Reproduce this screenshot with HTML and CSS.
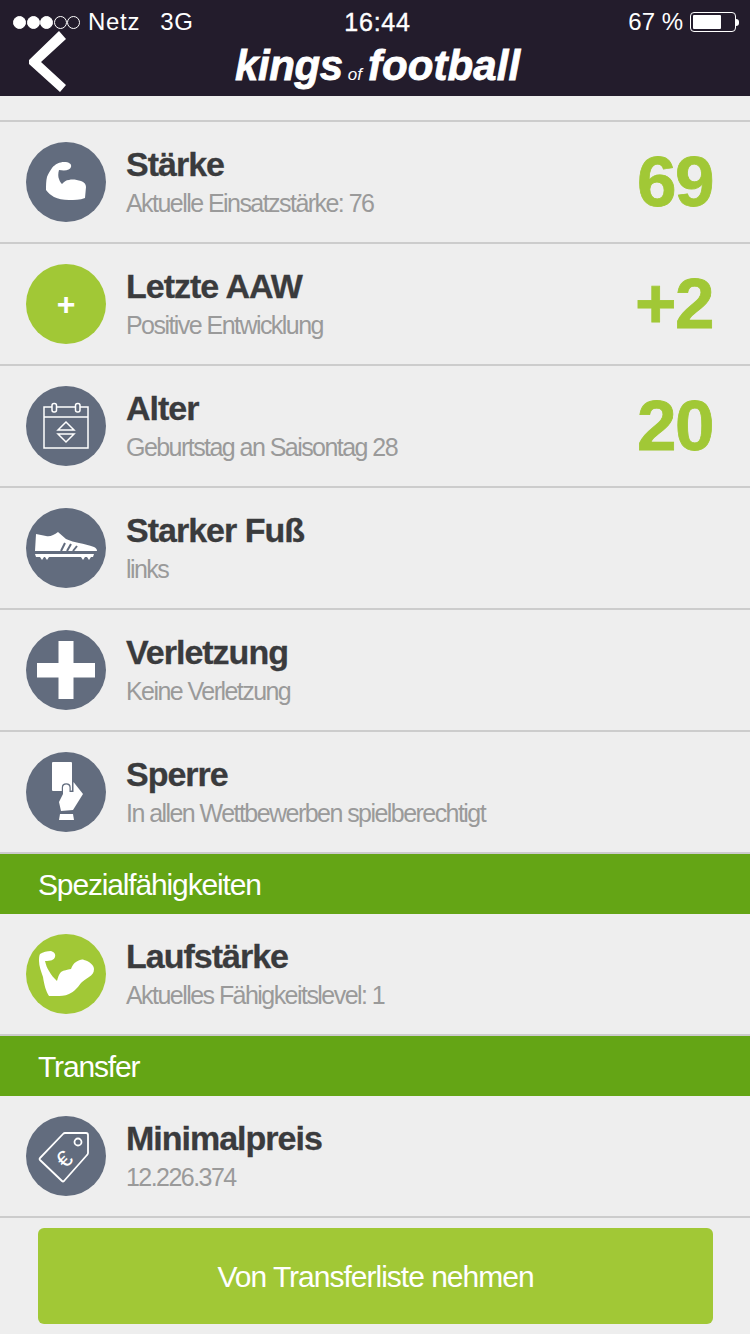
FILE: index.html

```html
<!DOCTYPE html>
<html lang="de">
<head>
<meta charset="UTF-8">
<meta name="viewport" content="width=device-width, initial-scale=1.0">
<title>Kings of Football</title>
<link rel="stylesheet" href="styles.css">
</head>
<body>

<div class="header">
  <div class="status-bar">
    <div class="status-left">
      <span class="signal">
        <i class="dot on"></i><i class="dot on"></i><i class="dot on"></i><i class="dot"></i><i class="dot"></i>
      </span>
      <span class="carrier">Netz</span>
      <span class="network">3G</span>
    </div>
    <div class="status-time">16:44</div>
    <div class="status-right">
      <span>67 %</span>
      <span class="battery"><span class="battery-level"></span></span>
      <span class="battery-nub"></span>
    </div>
  </div>
  <div class="nav">
    <svg class="back" width="40" height="62" viewBox="0 0 40 62"><path d="M32 0 L39 8 L14 31 L39 54 L33 61 L2 33 L2 29 Z" fill="#fff"/></svg>
    <div class="logo">kings<span class="logo-of">of</span><span class="logo-end">football</span></div>
  </div>
</div>

<div class="list">
  <div class="row">
    <div class="icon">
      <svg width="80" height="80" viewBox="0 0 80 80"><path d="M26 26 C29 22 34 20 38 20 C43 20 46 22 45 25 C44 28 40 29 33 28 C32 31 32 35 33 37 C34 40 35 41 36 42 C38 40 40 38 43 38 C47 37 51 38 55 39 C58 40 60 42 60 45 L59 56 C54 58 48 58 43 58 C37 58 32 57 28 55 C25 53 22 51 20 48 C20 43 20 39 21 35 C22 32 24 29 26 26 Z" fill="#fff"/></svg>
    </div>
    <div class="info">
      <div class="name">Stärke</div>
      <div class="desc">Aktuelle Einsatzstärke: 76</div>
    </div>
    <div class="value">69</div>
  </div>

  <div class="row">
    <div class="icon icon-green icon-plus">+</div>
    <div class="info">
      <div class="name">Letzte AAW</div>
      <div class="desc">Positive Entwicklung</div>
    </div>
    <div class="value">+2</div>
  </div>

  <div class="row">
    <div class="icon">
      <svg width="80" height="80" viewBox="0 0 80 80" fill="none" stroke="#fff" stroke-width="1.5">
        <path d="M26 21 H18 V62 H62 V21 H54 M31 21 H49 M18 31 H62"/>
        <rect x="26" y="17.5" width="4.5" height="8.5" rx="2"/>
        <rect x="49.5" y="17.5" width="4.5" height="8.5" rx="2"/>
        <path d="M40 36 L32 44 H48 Z M32 48 H48 L40 56 Z"/>
      </svg>
    </div>
    <div class="info">
      <div class="name">Alter</div>
      <div class="desc">Geburtstag an Saisontag 28</div>
    </div>
    <div class="value">20</div>
  </div>

  <div class="row">
    <div class="icon">
      <svg width="80" height="80" viewBox="0 0 80 80">
        <path d="M10 26 L20 28 C24 29 28 27 32 24 L40 31 C44 33 49 34 53 35 C58 36 63 37 68 39 C70 40 71 41 71 43 L9 43 Z" fill="#fff"/>
        <path d="M9 46 H68 L67 49 H65 L63 52 L61 49 H59 L57 52 L55 49 H23 L21 52 L19 49 H18 L16 52 L14 49 H10 Z" fill="#fff"/>
        <path d="M39 35 L35 43 M45 36 L41 43 M51 38 L47 43" stroke="#626c7e" stroke-width="2" fill="none"/>
      </svg>
    </div>
    <div class="info">
      <div class="name">Starker Fuß</div>
      <div class="desc">links</div>
    </div>
  </div>

  <div class="row">
    <div class="icon">
      <svg width="80" height="80" viewBox="0 0 80 80"><path d="M32.5 11 H47.5 V33 H69 V47.5 H47.5 V69 H32.5 V47.5 H11 V33 H32.5 Z" fill="#fff"/></svg>
    </div>
    <div class="info">
      <div class="name">Verletzung</div>
      <div class="desc">Keine Verletzung</div>
    </div>
  </div>

  <div class="row">
    <div class="icon">
      <svg width="80" height="80" viewBox="0 0 80 80">
        <rect x="26" y="10" width="20" height="29" rx="1" fill="#fff"/>
        <path d="M37 42 V35.500 C37 31.500 43.500 31.500 43.500 35.500 V40 H47.500 V30 L57 42 L47 58 L35 59 L33 50 Z" fill="#fff" stroke="#626c7e" stroke-width="2.400" paint-order="stroke"/>
        <path d="M34 62 H47 L48 68 H33 Z" fill="#fff"/>
      </svg>
    </div>
    <div class="info">
      <div class="name">Sperre</div>
      <div class="desc">In allen Wettbewerben spielberechtigt</div>
    </div>
  </div>
</div>

<div class="section-title">Spezialfähigkeiten</div>

<div class="row">
  <div class="icon icon-green">
    <svg width="80" height="80" viewBox="0 0 80 80"><path d="M14 20 C17 18 21 17 25 17 C28 18 30 20 29 23 C28 26 25 27 19 27 C20 31 21 34 23 37 C25 41 28 44 31 47 C32 43 33 40 35 38 C38 36 41 36 45 35 C46 32 48 29 50 28 C53 26 56 25 58 26 C63 27 68 31 68 35 C68 39 66 41 63 43 C60 45 57 47 55 49 C52 53 48 58 43 60 C39 62 34 62 30 62 L23 62 C20 58 18 50 17 43 C15 37 13 32 13 27 C13 24 13 22 14 20 Z" fill="#fff"/></svg>
  </div>
  <div class="info">
    <div class="name">Laufstärke</div>
    <div class="desc">Aktuelles Fähigkeitslevel: 1</div>
  </div>
</div>

<div class="section-title">Transfer</div>

<div class="row">
  <div class="icon">
    <svg width="80" height="80" viewBox="0 0 80 80">
      <path d="M39 17 H60 Q62 17 62 19 V37 Q62 38 61 39 L38 65 Q37 66 36 65 L14 44 Q13 43 14 42 L37 18 Q38 17 39 17 Z" fill="none" stroke="#fff" stroke-width="1.800"/>
      <circle cx="52" cy="26" r="3.500" fill="none" stroke="#fff" stroke-width="1.800"/>
      <text class="tag-euro" x="38" y="51" transform="rotate(-45 38 43)">€</text>
    </svg>
  </div>
  <div class="info">
    <div class="name">Minimalpreis</div>
    <div class="desc">12.226.374</div>
  </div>
</div>

<div class="button-wrap">
  <div class="main-btn">Von Transferliste nehmen</div>
</div>

</body>
</html>
```

FILE: styles.css

```css
* {
  margin: 0;
  padding: 0;
  box-sizing: border-box;
  font-family: "Liberation Sans", Arial, sans-serif;
}

body {
  background: #eeeeee;
  color: #3a3b3d;
  width: 750px;
  height: 1334px;
  overflow: hidden;
}

.header {
  background: #231c2c;
  color: #fff;
  height: 96px;
}

.status-bar {
  display: grid;
  grid-template-columns: 1fr auto 1fr;
  align-items: center;
  height: 40px;
  padding: 4px 11px 0 13px;
  font-size: 24px;
}

.status-left {
  display: flex;
  align-items: center;
}

.signal {
  display: flex;
  width: 75px;
}

.dot {
  width: 13px;
  height: 13px;
  margin-right: 0.5px;
  border: 1px solid #fff;
  border-radius: 50%;
}

.dot.on {
  background: #fff;
}

.carrier {
  letter-spacing: 0.7px;
}

.network {
  margin-left: 20px;
  letter-spacing: 0.7px;
}

.status-time {
  font-size: 25px;
  letter-spacing: 0.8px;
  margin-left: 3px;
  -webkit-text-stroke: 0.4px #fff;
}

.status-right {
  display: flex;
  align-items: center;
  justify-content: flex-end;
}

.battery {
  width: 46px;
  height: 20px;
  margin-left: 7px;
  padding: 2px;
  border: 1px solid #fff;
  border-radius: 4px;
}

.battery-level {
  display: block;
  width: 28px;
  height: 100%;
  background: #fff;
  border-radius: 1px;
}

.battery-nub {
  width: 3px;
  height: 7px;
  background: #fff;
  border-radius: 0 3px 3px 0;
}

.nav {
  display: flex;
  align-items: flex-start;
  height: 56px;
}

.back {
  margin: -9px 0 0 27px;
  flex: none;
}

.logo {
  margin: 2px 0 0 168px;
  font-size: 42px;
  line-height: 48px;
  font-weight: bold;
  font-style: italic;
  letter-spacing: -0.4px;
  white-space: nowrap;
  -webkit-text-stroke: 0.8px #fff;
}

.logo-of {
  margin: 0 6px 0 5px;
  font-size: 17px;
  font-weight: normal;
  letter-spacing: 0;
  font-style: italic;
  -webkit-text-stroke: 0;
}

.logo-end {
  letter-spacing: 0.1px;
}

.list {
  margin-top: 24px;
  border-top: 2px solid #cccccc;
}

.row {
  display: flex;
  align-items: flex-start;
  height: 122px;
  padding: 20px 37px 20px 26px;
  border-bottom: 2px solid #cccccc;
}

.icon {
  flex: none;
  display: flex;
  align-items: center;
  justify-content: center;
  width: 80px;
  height: 80px;
  background: #626c7e;
  border-radius: 50%;
}

.icon-green {
  background: #a1c836;
}

.icon-plus {
  color: #fff;
  font-size: 32px;
  font-weight: bold;
}

.tag-euro {
  fill: #fff;
  font-size: 23px;
  text-anchor: middle;
}

.info {
  flex: 1;
  margin-left: 20px;
}

.name {
  margin-top: 2px;
  font-size: 34px;
  line-height: 40px;
  font-weight: bold;
  letter-spacing: -1px;
  -webkit-text-stroke: 0.3px #3a3b3d;
}

.desc {
  margin-top: 3px;
  font-size: 25px;
  line-height: 32px;
  color: #9a9a9a;
  letter-spacing: -1.550px;
}

.value {
  font-size: 71px;
  line-height: 80px;
  font-weight: bold;
  letter-spacing: -1.500px;
  color: #a1c836;
  -webkit-text-stroke: 0.8px #a1c836;
}

.section-title {
  height: 60px;
  padding-left: 38px;
  background: #64a515;
  color: #fff;
  font-size: 30px;
  line-height: 62px;
  letter-spacing: -1.150px;
}

.button-wrap {
  padding: 10px 37px 0 38px;
}

.main-btn {
  height: 96px;
  background: #a1c836;
  border-radius: 6px;
  color: #fff;
  font-size: 30px;
  line-height: 98px;
  letter-spacing: -1px;
  text-align: center;
}
```
